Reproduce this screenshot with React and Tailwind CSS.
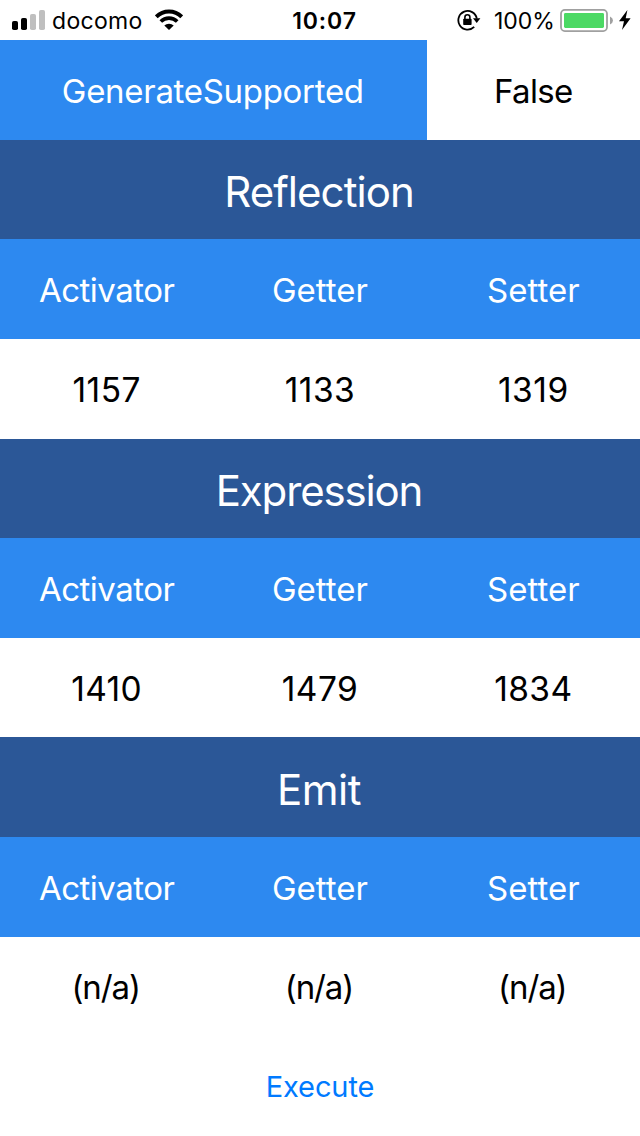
const rows = [
  {
    title: 'Reflection',
    titleClass: 'tracking-[-0.95px]',
    values: ['1157', '1133', '1319'],
    valueClass: 'text-[33.5px] tracking-[0.5px] leading-[46px]',
  },
  {
    title: 'Expression',
    titleClass: 'tracking-[-1.15px]',
    values: ['1410', '1479', '1834'],
    valueClass: 'text-[33.5px] tracking-[0.4px] leading-[46px]',
  },
  {
    title: 'Emit',
    titleClass: 'tracking-[-0.5px]',
    values: ['(n/a)', '(n/a)', '(n/a)'],
    valueClass: 'text-[33px] tracking-[-1.1px] pr-[2px]',
  },
];

function SignalIcon() {
  return (
    <svg className="h-[40px] w-[34px] shrink-0" viewBox="0 0 34 40">
      <rect x="0" y="21" width="6" height="9" rx="1.8" fill="#000" />
      <rect x="9" y="18" width="6" height="12" rx="1.8" fill="#000" />
      <rect x="18" y="14" width="6" height="16" rx="1.8" fill="#bfbfbf" />
      <rect x="27" y="10" width="6" height="20" rx="1.8" fill="#bfbfbf" />
    </svg>
  );
}

function WifiIcon() {
  return (
    <svg className="h-[40px] w-[28px] shrink-0" viewBox="0 0 28 40" fill="none" stroke="#000">
      <path d="M1.3 16.8A18 18 0 0 1 26.7 16.8" strokeWidth="3.9" />
      <path d="M5.8 21.5A11.7 11.7 0 0 1 22.2 21.5" strokeWidth="3.7" />
      <path d="M14 30L9.3 25.6A6.6 6.6 0 0 1 18.7 25.6Z" fill="#000" stroke="none" />
    </svg>
  );
}

function RotationLockIcon() {
  return (
    <svg className="h-[40px] w-[24px] shrink-0" viewBox="0 0 24 40" fill="none">
      <path d="M17.2 26.9A9.3 9.3 0 1 1 19.8 18.6" stroke="#000" strokeWidth="1.8" />
      <path d="M16 18.3H23.4L19.7 23Z" fill="#000" />
      <rect x="6.2" y="18.8" width="8.4" height="6.2" rx="0.8" fill="#000" />
      <path d="M7.9 19.5V17.2A2.5 2.5 0 0 1 12.9 17.2V19.5" stroke="#000" strokeWidth="1.6" />
    </svg>
  );
}

function BatteryIcon() {
  return (
    <svg className="h-[40px] w-[54px] shrink-0" viewBox="0 0 54 40">
      <rect x="1" y="9.9" width="46" height="21.2" rx="3.8" fill="#fff" stroke="#a0a0a0" strokeWidth="1.8" />
      <rect x="4" y="13" width="40" height="15" rx="1.4" fill="#4cd964" />
      <path d="M50 16.6Q53 18 53 20.5T50 24.4Z" fill="#a0a0a0" />
    </svg>
  );
}

function BoltIcon() {
  return (
    <svg className="h-[40px] w-[12px] shrink-0" viewBox="0 0 12 40">
      <path d="M8.4 10L0 21.2H5L3 30L11.6 18.2H6.7Z" fill="#000" />
    </svg>
  );
}

function StatusBar() {
  return (
    <header className="grid h-10 shrink-0 grid-cols-3 items-start text-[23px] leading-[42px]">
      <div className="flex h-10 pl-3">
        <SignalIcon />
        <span className="ml-[6px] w-[95px] whitespace-nowrap tracking-[0.3px]">docomo</span>
        <span className="ml-2 flex">
          <WifiIcon />
        </span>
      </div>
      <div className="h-10 pl-[9px] text-center font-semibold tracking-[0.9px]">10:07</div>
      <div className="flex h-10 justify-end pr-[9px]">
        <RotationLockIcon />
        <span className="ml-[13px] w-[66px] whitespace-nowrap">100%</span>
        <BatteryIcon />
        <span className="ml-[5px] flex">
          <BoltIcon />
        </span>
      </div>
    </header>
  );
}

function Cells({ items, className, cellClass }) {
  return (
    <div className={`grid min-h-0 flex-1 grid-cols-3 items-center text-center ${className}`}>
      {items.map((t, i) => (
        <div key={i} className={`${t === 'Activator' ? 'tracking-[-0.5px]' : ''} ${cellClass}`}>
          {t}
        </div>
      ))}
    </div>
  );
}

export default function App() {
  return (
    <div className="flex h-[1136px] w-[640px] flex-col overflow-hidden bg-white font-['Inter',sans-serif] text-black">
      <StatusBar />
      <div className="grid min-h-0 flex-1 grid-cols-3 text-center text-[33px]">
        <div className="col-span-2 flex items-center justify-center bg-[#2d89f0] tracking-[-0.3px] text-white">
          <span className="pt-1 pr-px">GenerateSupported</span>
        </div>
        <div className="flex items-center justify-center tracking-[-0.6px]">
          <span className="pt-1">False</span>
        </div>
      </div>
      {rows.map((r) => (
        <section key={r.title} className="flex min-h-0 flex-[3_1_0%] flex-col">
          <h2
            className={`flex min-h-0 flex-1 items-center justify-center bg-[#2b5797] text-[42px] text-white ${r.titleClass}`}
          >
            <span className="pt-[5px] pr-[2px]">{r.title}</span>
          </h2>
          <Cells
            items={['Activator', 'Getter', 'Setter']}
            className="bg-[#2d89f0] text-[33px] text-white"
            cellClass="pt-1"
          />
          <Cells items={r.values} className="" cellClass={`pt-[3px] ${r.valueClass}`} />
        </section>
      ))}
      <button className="flex min-h-0 flex-1 items-center justify-center text-[29px] tracking-[-0.1px] text-[#007aff]">
        <span className="pt-[2px]">Execute</span>
      </button>
    </div>
  );
}
